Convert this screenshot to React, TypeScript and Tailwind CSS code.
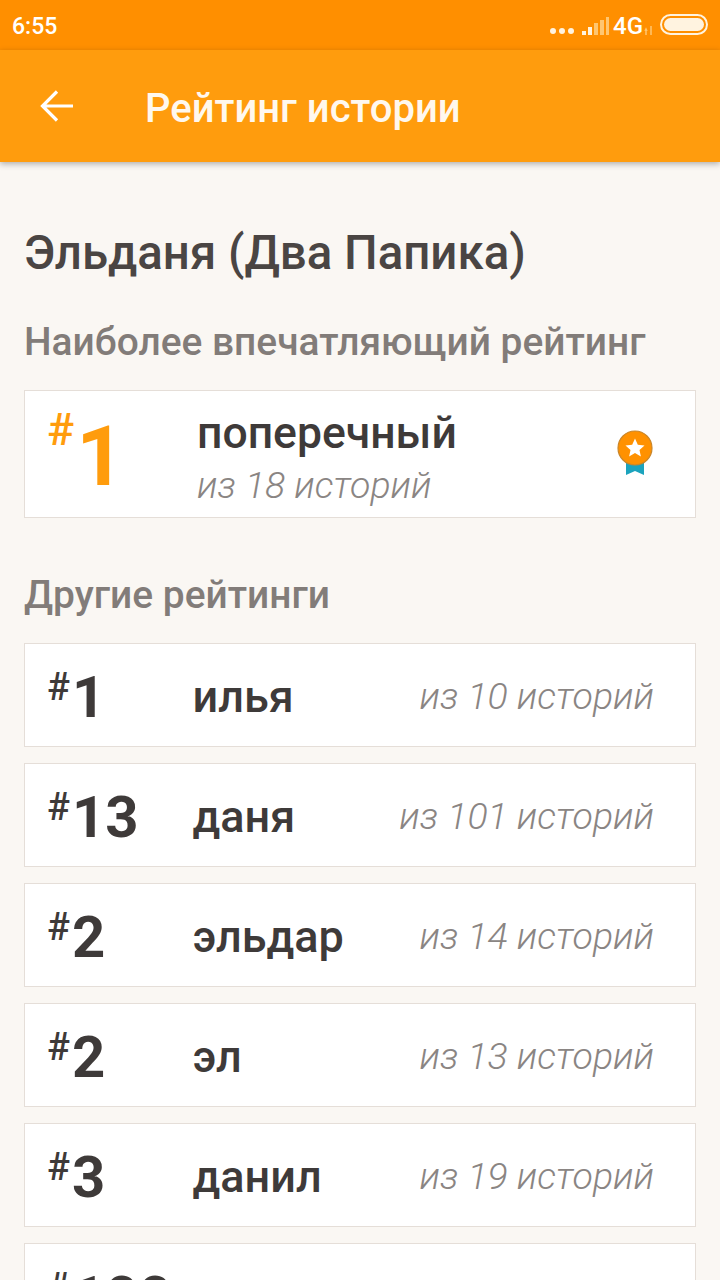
import React from 'react';

const rankings = [
  { rank: '1', name: 'илья', total: 'из 10 историй' },
  { rank: '13', name: 'даня', total: 'из 101 историй' },
  { rank: '2', name: 'эльдар', total: 'из 14 историй' },
  { rank: '2', name: 'эл', total: 'из 13 историй' },
  { rank: '3', name: 'данил', total: 'из 19 историй' },
  { rank: '100', name: 'дима', total: 'из 120 историй' },
];

const StatusBar = () => (
  <div className="h-[50px] shrink-0 bg-[#ff8f00] flex items-center justify-between pl-[12px] pr-[12px] text-white">
    <span className="text-[23px] font-medium leading-none mt-[2px]">6:55</span>
    <div className="flex items-center mt-[2px]">
      <div className="flex gap-[3px] mr-[7px] mt-[10px]">
        <span className="w-[6px] h-[6px] rounded-full bg-[#fff3e0]" />
        <span className="w-[6px] h-[6px] rounded-full bg-[#fff3e0]" />
        <span className="w-[6px] h-[6px] rounded-full bg-[#fff3e0]" />
      </div>
      <svg width="28" height="20" viewBox="0 0 28 20" className="mr-[4px]">
        <rect x="1" y="15" width="4" height="4" fill="#fff3e0" />
        <rect x="7" y="11" width="4" height="8" fill="#fff3e0" />
        <rect x="13" y="7" width="4" height="12" fill="#ffc670" />
        <rect x="19" y="4" width="4" height="15" fill="#ffc670" />
        <rect x="25" y="1" width="3" height="18" fill="#ffc670" />
      </svg>
      <span className="text-[24px] font-medium leading-none">4G</span>
      <svg width="10" height="12" viewBox="0 0 10 12" className="ml-[1px] mr-[6px] mt-[6px]">
        <path d="M2 12V6M1 8l1-2 1 2M7 12V3" stroke="#ffc670" strokeWidth="1.5" fill="none" />
      </svg>
      <div className="w-[48px] h-[21px] rounded-full border-[2px] border-[#fff3e0] p-[2px] mt-[-3px]">
        <div className="w-full h-full rounded-full bg-[#fff3e0]" />
      </div>
    </div>
  </div>
);

const Header = () => (
  <div className="h-[112px] shrink-0 bg-[#ff9c0d] flex items-center shadow-[0_2px_6px_rgba(0,0,0,0.3)] relative z-10">
    <svg width="34" height="32" viewBox="0 0 34 32" className="ml-[40px]" fill="none" stroke="white" strokeWidth="3.2">
      <path d="M33 16H3M17 1.500 2.500 16 17 30.500" />
    </svg>
    <span className="ml-[71px] text-[40px] font-medium text-[#fff8ee] leading-none mt-[6px]">Рейтинг истории</span>
  </div>
);

const Medal = () => (
  <svg width="36" height="46" viewBox="0 0 36 46" className="mr-[42px] mt-[-2px]">
    <path d="M9 28h18v17l-9-4-9 4z" fill="#1ba3bd" />
    <circle cx="18" cy="18" r="17" fill="#ff9100" stroke="#c9862a" strokeWidth="1.200" />
    <path d="M18 8.500l2.800 6.200 6.700.700-5 4.500 1.400 6.600-5.900-3.400-5.900 3.400 1.400-6.600-5-4.500 6.700-.700z" fill="#fff" />
  </svg>
);

const RankRow = ({ rank, name, total }: { rank: string; name: string; total: string }) => (
  <div className="h-[104px] border border-[#e5ded8] bg-white flex items-center pl-[22px] pr-[41px]">
    <div className="w-[145.500px] shrink-0 flex items-start text-[#3e3a39]">
      <span className="text-[38px] font-medium leading-none mt-[3px]">#</span>
      <span className="text-[58px] font-bold leading-none mt-[3px] ml-[2px]">{rank}</span>
    </div>
    <span className="text-[45px] font-medium text-[#3e3a39] leading-none mt-[2px]">{name}</span>
    <span className="ml-auto text-[37.500px] font-light italic text-[#8a8583] leading-none mt-[4px]">{total}</span>
  </div>
);

export default function App() {
  return (
    <div className="w-[720px] h-[1280px] overflow-hidden flex flex-col bg-[#faf7f3] font-['Roboto',sans-serif]">
      <StatusBar />
      <Header />
      <div className="px-[24px] flex flex-col">
        <h1 className="mt-[63px] text-[47.400px] font-medium text-[#4a4543] leading-[56px]">Эльданя (Два Папика)</h1>
        <h2 className="mt-[39px] text-[38.900px] font-medium text-[#827c79] leading-[44px]">Наиболее впечатляющий рейтинг</h2>
        <div className="mt-[26px] h-[128px] border border-[#e5ded8] bg-white flex items-center pl-[22px]">
          <div className="w-[150px] shrink-0 flex items-start">
            <span className="text-[45px] font-medium text-[#ff9c0d] leading-none mt-[-3px]">#</span>
            <span className="text-[84px] font-bold text-[#ff9c0d] leading-none mt-[5px] ml-[2px]">1</span>
          </div>
          <div className="flex flex-col mt-[9px]">
            <span className="text-[44.500px] font-medium text-[#3e3a39] leading-[52px]">поперечный</span>
            <span className="text-[37.500px] font-light italic text-[#8a8583] leading-[52px]">из 18 историй</span>
          </div>
          <div className="ml-auto flex items-center">
            <Medal />
          </div>
        </div>
        <h2 className="mt-[55px] text-[38.900px] font-medium text-[#827c79] leading-[44px]">Другие рейтинги</h2>
        <div className="mt-[26px] flex flex-col gap-[16px]">
          {rankings.map((r) => (
            <RankRow key={r.name} {...r} />
          ))}
        </div>
      </div>
    </div>
  );
}
